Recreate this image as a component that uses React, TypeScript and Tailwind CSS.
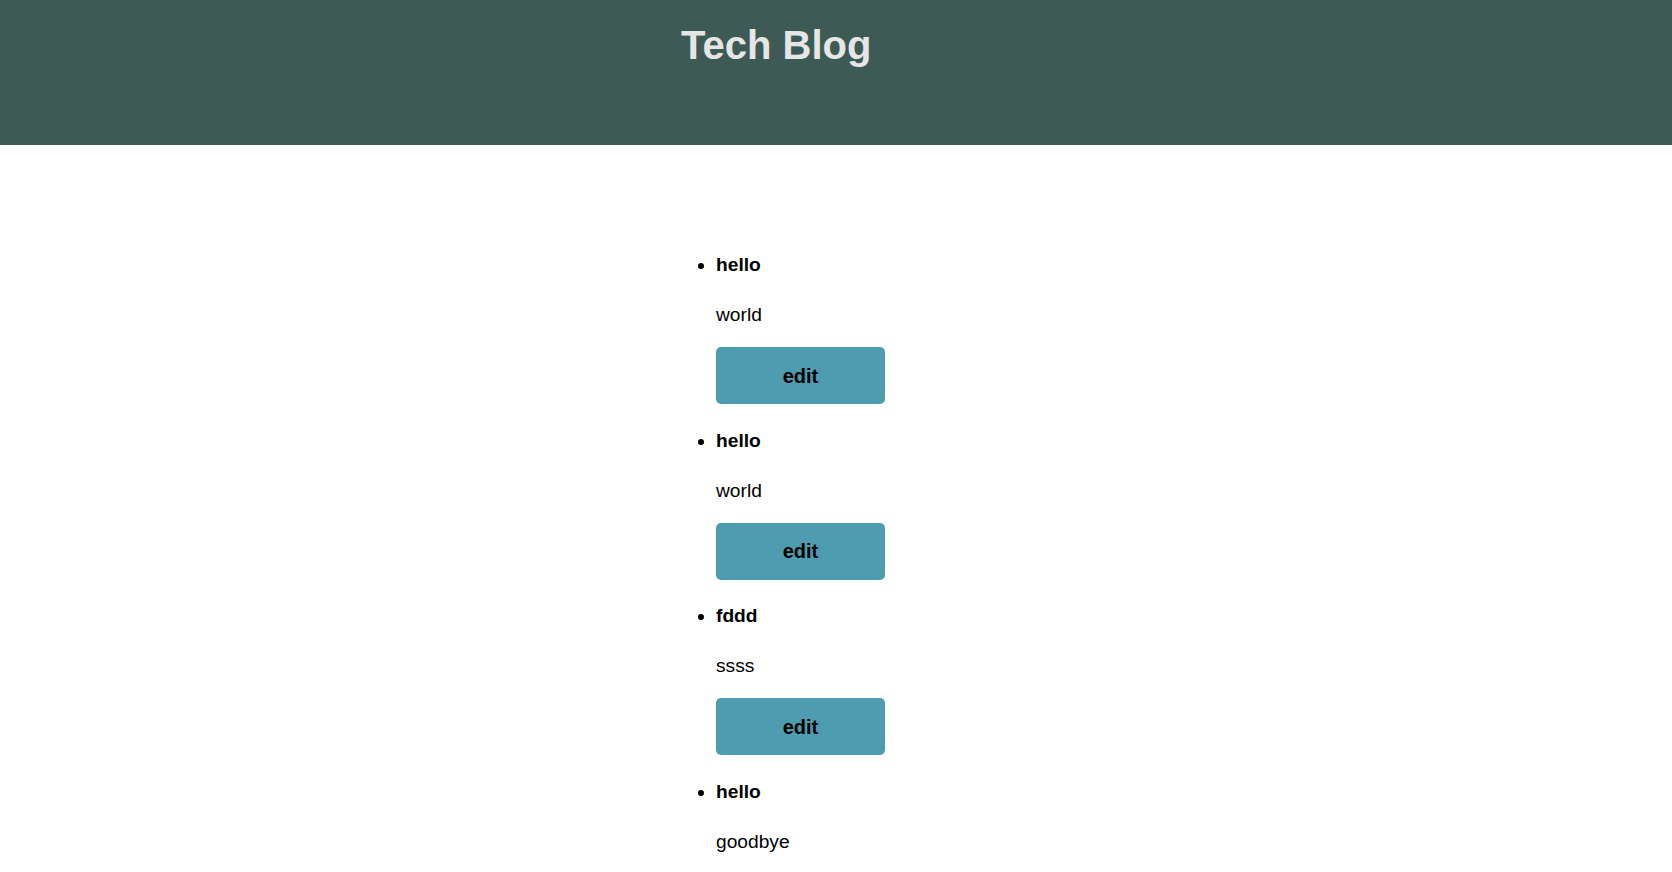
const posts = [
  { title: "hello", body: "world" },
  { title: "hello", body: "world" },
  { title: "fddd", body: "ssss" },
  { title: "hello", body: "goodbye" },
]

function PostItem({ title, body }: { title: string; body: string }) {
  return (
    <li className="mb-[25.7px] text-[19.2px] leading-[22px]">
      <h3 className="font-bold">{title}</h3>
      <p className="mt-[28px]">{body}</p>
      <button className="mt-[21px] h-[57px] w-[169px] rounded-[5px] bg-[#4d9cb0] align-top text-[20px] font-bold text-black">
        edit
      </button>
    </li>
  )
}

export default function App() {
  return (
    <div className="min-h-screen bg-white font-['Liberation_Sans',Arial,sans-serif] text-black">
      <header className="h-[145px] bg-[#3d5a54]">
        <div className="mx-auto w-[310px] pt-[22px]">
          <h1 className="text-[40px] font-bold leading-[46px] text-[#e6e6e6]">Tech Blog</h1>
        </div>
      </header>

      <main className="mx-auto w-[310px] pt-[109px]">
        <ul className="list-disc pl-[35px]">
          {posts.map((p, i) => (
            <PostItem key={i} title={p.title} body={p.body} />
          ))}
        </ul>
      </main>
    </div>
  )
}
